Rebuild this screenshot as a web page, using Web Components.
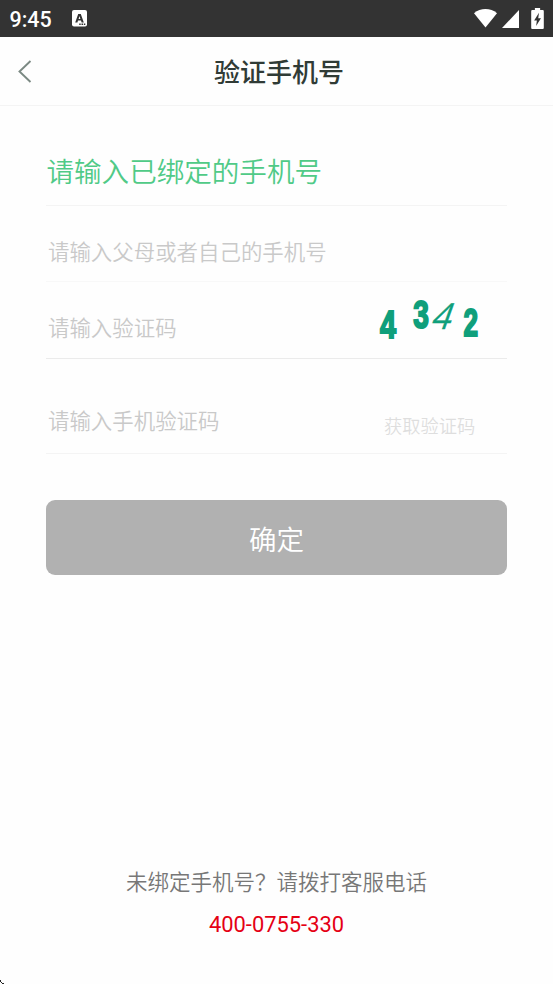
<!DOCTYPE html>
<html lang="zh-CN">
<head>
<meta charset="utf-8">
<title>验证手机号</title>
<style>
body{margin:0;background:#fefefe;font-family:Roboto,"Noto Sans CJK SC",sans-serif}
</style>
</head>
<body>
<verify-page></verify-page>
<script>
const define=(name,html)=>{
  const t=document.createElement('template');
  t.innerHTML=html;
  customElements.define(name,class extends HTMLElement{
    constructor(){super();this.attachShadow({mode:'open'}).append(t.content.cloneNode(true));}
  });
};
define('status-bar',`<style>
:host{display:flex;align-items:center;box-sizing:border-box;height:37px;background:#333;color:#fff;padding:0 9px 0 9.500px;font:500 21.4px/37px Roboto,sans-serif}
span{padding-top:2px}.badge{margin:0 auto 0 20px}svg{display:block;flex:none}.wifi{margin-right:5px}.signal{margin-right:12px}
</style><span>9:45</span>
<svg class="badge" width="15" height="17" viewBox="0 0 15 17"><rect width="15" height="16.5" rx="2" fill="#fff"/><path fill="#333" fill-rule="evenodd" d="M3.2 12.500 6.2 4h2.600l3 8.500H9.6L9 10.500H6L5.4 12.500ZM6.600 8.900h1.800L7.5 6.1Z"/><path fill="#333" d="M7.2 13.5h1.5V15H7.2ZM9.5 13.5H11V15H9.5ZM11.8 13.5h1.5V15h-1.5Z"/></svg>
<svg class="wifi" width="23" height="19" viewBox="0 0 23 19"><path fill="#fff" d="M0 4.2C6.6-1.4 16.4-1.4 23 4.2L11.5 18.5Z"/></svg>
<svg class="signal" width="17" height="18" viewBox="0 0 17 18"><path fill="#fff" d="M17 0V18H0Z"/></svg>
<svg width="13" height="21" viewBox="0 0 12 20"><path fill="#fff" d="M3.5 0h5v2H11q1 0 1 1v16q0 1-1 1H1q-1 0-1-1V3q0-1 1-1h2.500Z"/><path fill="#333" d="M7.400 4.500 2.800 11.800H5.400L4.700 17.200 9.300 9.700H6.700Z"/></svg>`);
define('nav-bar',`<style>
:host{display:grid;grid-template-columns:50px 1fr 45px;align-items:center;height:68px;border-bottom:1px solid #f4f4f4}
svg{display:block;margin-left:18px}h1{margin:0;padding-top:3px;font:500 26px/38px Roboto,"Noto Sans CJK SC",sans-serif;color:#303b36;text-align:center}
</style><svg width="14" height="23" viewBox="0 0 14 23"><path d="M12.500 1 1.500 11.500 12.500 22" fill="none" stroke="#7b8983" stroke-width="1.900"/></svg><h1><slot></slot></h1>`);
define('form-row',`<style>
:host{display:flex;justify-content:space-between;box-sizing:border-box;height:var(--h);border-bottom:1px solid var(--line,#f4f4f4);padding:var(--top) 0 0 2px;font-size:21.450px;line-height:30px;font-weight:var(--w,350);color:#c9c9c9;white-space:nowrap}
</style><span><slot></slot></span><slot name="end"></slot>`);
define('form-heading',`<style>
:host{display:block;box-sizing:border-box;height:100px;padding:47px 0 0 .5px;border-bottom:1px solid #f4f4f4}h2{margin:0;font-size:27.550px;line-height:40px;font-weight:350;color:#50ca87}
</style><h2><slot></slot></h2>`);
define('captcha-code',`<style>
:host{display:block;width:133px;height:70px}svg{display:block}text{fill:#0f9f7b;font-family:"Liberation Sans Narrow","Liberation Sans",Arial,sans-serif;font-weight:700}.fat{stroke:#0f9f7b;stroke-width:2}.thin{font-family:"Open Sans",sans-serif;font-weight:400;stroke:#0f9f7b;stroke-width:.3}
</style><svg width="133" height="70" viewBox="374 285 133 70">
<text class="fat" transform="translate(380 338.300) scale(.75 1)" font-size="38.500">4</text>
<text class="fat" transform="translate(413.300 327.500) scale(.74 1)" font-size="38">3</text>
<text class="thin" transform="translate(429.500 328.500) skewX(-20) scale(.95 1)" font-size="36">4</text>
<text class="fat" transform="translate(463.500 336) scale(.68 1)" font-size="38.500">2</text></svg>`);
define('code-link',`<style>
:host{display:block;width:123px;font-size:18.300px;line-height:30px;padding-top:5px;color:#dedede}
</style><slot></slot>`);
define('submit-button',`<style>
:host{display:block;margin-top:46px}button{display:block;width:100%;height:75px;border:0;border-radius:9px;padding:2px 0 0;background:#b1b1b1;color:#fff;font:350 27.500px/77px Roboto,"Noto Sans CJK SC",sans-serif}
</style><button><slot></slot></button>`);
define('support-info',`<style>
:host{display:block;margin-top:auto;padding-bottom:43px;text-align:center;color:#777;font-size:21.500px;line-height:32px;font-weight:350}
::slotted(a){display:block;margin-top:10px;color:#e50014;text-decoration:none;font-weight:400;font-size:21.900px;line-height:32px}
</style><slot></slot><slot name="phone"></slot>`);
define('corner-mark',`<style>:host{position:absolute;left:0;top:980px;width:4px;height:4px}svg{display:block}</style><svg width="4" height="4"><path fill="#222" d="M0 0h1v2H0ZM1 2h1v1H1ZM2 3h2v1H2Z"/></svg>`);
define('verify-page',`<style>
:host{display:flex;flex-direction:column;height:984px;position:relative;overflow:hidden}
main{padding:0 46px;display:block}
.phone{--top:32px;--h:76px;--line:#f8f8f8}.captcha{--top:32px;--h:77px;--line:#ebebeb}.sms{--top:48px;--h:95px}
captcha-code{margin-top:-29px}
</style>
<status-bar></status-bar><nav-bar>验证手机号</nav-bar>
<main><form-heading>请输入已绑定的手机号</form-heading>
<form-row class="phone">请输入父母或者自己的手机号</form-row>
<form-row class="captcha">请输入验证码<captcha-code slot="end"></captcha-code></form-row>
<form-row class="sms">请输入手机验证码<code-link slot="end">获取验证码</code-link></form-row>
<submit-button>确定</submit-button></main>
<support-info>未绑定手机号？请拨打客服电话<a slot="phone">400-0755-330</a></support-info><corner-mark></corner-mark>`);
</script>
</body>
</html>
